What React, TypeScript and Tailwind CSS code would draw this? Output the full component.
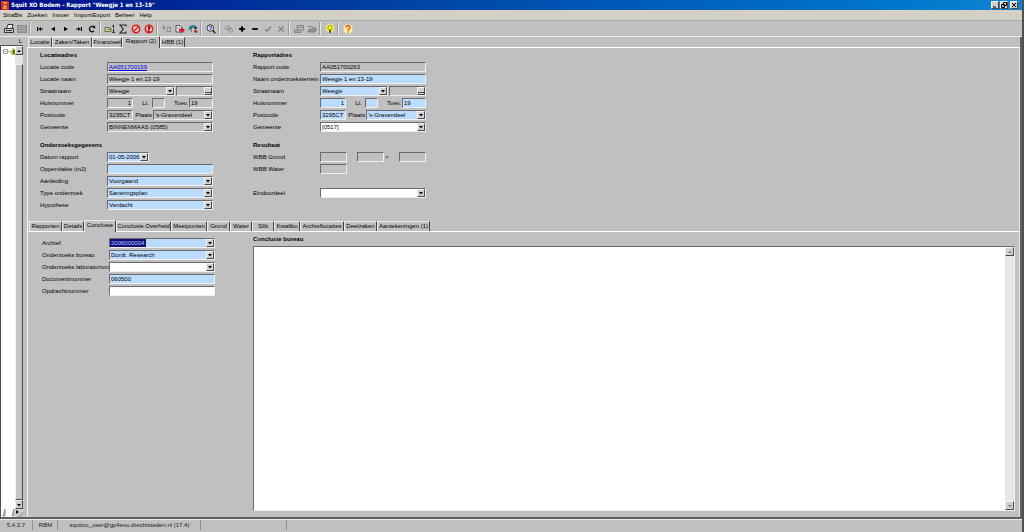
import React, { useState } from "react";
import clsx from "clsx";

const sunken =
  "border border-t-[#6a6a6a] border-l-[#6a6a6a] border-b-[#f0f0f0] border-r-[#f0f0f0]";
const raised =
  "border border-t-[#f4f4f4] border-l-[#f4f4f4] border-b-[#4a4a4a] border-r-[#4a4a4a]";

const tones = {
  gray: "bg-[#c0c0c0]",
  blue: "bg-[#bbdcff]",
  white: "bg-white",
};

type Tone = keyof typeof tones;

/* ---------- icons ---------- */

const icons: Record<string, React.ReactNode> = {
  print: (
    <g fill="none" stroke="#333" strokeWidth="1">
      <path d="M3.5 5.5 L5 1.5 H10 L9 5.5" fill="#eee" />
      <path d="M1.5 5.5 H10.5 V9.5 H1.5 Z" fill="#c8c8c8" />
      <path d="M3 7.5 H9" />
    </g>
  ),
  list: (
    <g fill="none" stroke="#8a8a8a">
      <path d="M1.5 2.5 H10.5 V9.5 H1.5 Z" fill="#a8a8a8" />
      <path d="M2 4.5 H10 M2 6.5 H10 M2 8.5 H10" stroke="#969696" />
    </g>
  ),
  first: <path d="M3 4 H4.2 V8 H3 Z M4.5 6 L7 4 V8 Z M7 5.5 H9 V6.5 H7 Z" fill="#000" />,
  prev: <path d="M4 6 L8 3.8 V8.2 Z" fill="#000" />,
  next: <path d="M8 6 L4 3.8 V8.2 Z" fill="#000" />,
  last: <path d="M9 4 H7.8 V8 H9 Z M7.5 6 L5 4 V8 Z M5 5.5 H3 V6.5 H5 Z" fill="#000" />,
  refresh: (
    <g fill="none" stroke="#111" strokeWidth="1.3">
      <path d="M8 8 A2.7 2.7 0 1 1 7.5 3.6" />
      <path d="M6 5.2 L9.3 5.2 L9 2 Z" fill="#111" stroke="none" />
    </g>
  ),
  key: (
    <g>
      <path d="M1 4.5 H5 L7 5.5 V8.5 H1 Z" fill="#e4dc78" stroke="#444" strokeWidth=".7" />
      <path d="M3 6.3 H7" stroke="#444" strokeWidth=".7" />
      <path d="M9.5 2 V5 M9.5 6 V10 M8.3 3 L9.5 2 M8.3 9.5 H10.8" stroke="#222" fill="none" />
    </g>
  ),
  sum: <path d="M9 3.5 V2 H3 L6.3 6 L3 10 H9 V8.5" fill="none" stroke="#222" strokeWidth="1.1" />,
  stop: (
    <g fill="none" stroke="#e01c1c" strokeWidth="1.5">
      <circle cx="6" cy="6" r="3.7" fill="#e6cccc" />
      <path d="M3.5 8.5 L8.5 3.5" />
    </g>
  ),
  stopAll: (
    <g fill="none" stroke="#e01c1c" strokeWidth="1.5">
      <circle cx="6" cy="6" r="3.7" fill="#e6cccc" />
      <path d="M3.5 8.3 L8.5 3.7" strokeWidth="1" />
      <path d="M6 3.2 V6.6 M6 7.6 V9" stroke="#8c0000" strokeWidth="1.8" />
    </g>
  ),
  copyOff: (
    <g fill="none" stroke="#858585" strokeWidth=".9">
      <path d="M6 4.5 H9.5 V8.5 H6 Z" />
      <path d="M1.5 3 L4 6 M4 3 L1.5 6 M2.7 2.5 V6.5" />
    </g>
  ),
  export: (
    <g>
      <path d="M2 2.5 H6 L7.5 4 V9 H2 Z" fill="#f0f0f0" stroke="#333" strokeWidth=".8" />
      <path d="M3 5 H6" stroke="#333" strokeWidth=".6" />
      <path d="M5 6 H7.5 V4 L11 7.2 L7.5 10.5 V8.5 H5 Z" fill="#dc1028" />
    </g>
  ),
  swap: (
    <g>
      <path d="M1 6.5 L3 3 L6 2 L9 3 L9 5 L6 4 L4.5 6.5 Z" fill="#1d7f80" />
      <path d="M7 4 H10 V6 H7 Z" fill="#335" />
      <circle cx="8.7" cy="8.3" r="1.6" fill="#b02828" />
      <path d="M4.3 6 V9" stroke="#777" />
    </g>
  ),
  zoom: (
    <g fill="none">
      <circle cx="5.3" cy="5" r="3.3" fill="#d8dce8" stroke="#333" strokeWidth=".9" />
      <path d="M4.2 4 A1.2 1.1 0 1 1 5.4 5.2 V6.8" stroke="#2038b0" strokeWidth=".9" />
      <path d="M7.6 7.3 L10.2 10.2" stroke="#222" strokeWidth="1.5" />
    </g>
  ),
  linkOff: (
    <g fill="none" stroke="#808080" strokeWidth=".9">
      <path d="M2 5.5 L5 2.5 L7 5 L4.5 6.5 Z" />
      <path d="M5.5 7 L8 5 L10 7.5 L8 9.5 Z" />
    </g>
  ),
  plus: <path d="M6 3.2 V8.8 M3.2 6 H8.8" stroke="#000" strokeWidth="1.8" />,
  minus: <path d="M3.2 6 H8.8" stroke="#000" strokeWidth="1.8" />,
  check: <path d="M3 6.2 L5 8.3 L9 3.5" fill="none" stroke="#808080" strokeWidth="1.2" />,
  cross: <path d="M3.5 3.5 L8.5 8.5 M8.5 3.5 L3.5 8.5" stroke="#808080" strokeWidth="1.1" />,
  formOff: (
    <g fill="none" stroke="#808080" strokeWidth=".9">
      <path d="M4 2.5 H10.5 V7 H4 Z M4 4.2 H10" />
      <path d="M1.5 6 V9.5 H8 V7.5" />
      <path d="M2 8 H7" />
    </g>
  ),
  openOff: (
    <g stroke="#808080" strokeWidth=".9">
      <path d="M2 3.5 H5.5 L6.5 4.5 H9 V6" fill="none" />
      <path d="M2 9 L3.5 6 H10.5 L9 9 Z" fill="#909090" />
    </g>
  ),
  bulb: (
    <g>
      <circle cx="6" cy="5.3" r="4.2" fill="#f2f060" />
      <circle cx="6" cy="4.8" r="2.2" fill="#ffff30" stroke="#777700" strokeWidth=".8" />
      <path d="M5 7.3 H7 V9.8 H5 Z" fill="#444" />
    </g>
  ),
  help: (
    <g fill="none">
      <circle cx="6" cy="6" r="4.6" fill="#fff0a0" />
      <path d="M4 4.5 A2 1.8 0 1 1 6.2 6.3 V7.4" stroke="#dc5a10" strokeWidth="1.4" />
      <path d="M6.2 8.3 V9.7" stroke="#dc5a10" strokeWidth="1.4" />
    </g>
  ),
};

const toolGroups = [
  ["print", "list"],
  ["first", "prev", "next", "last", "refresh"],
  ["key", "sum", "stop", "stopAll"],
  ["copyOff", "export", "swap"],
  ["zoom"],
  ["linkOff", "plus", "minus", "check", "cross"],
  ["formOff", "openOff"],
  ["bulb"],
  ["help"],
];

function Arrow({ up = false, color = "#000" }: { up?: boolean; color?: string }) {
  return (
    <svg viewBox="0 0 6 6" className="block h-[6px] w-[6px]">
      <path d={up ? "M1 4 L3 2 L5 4 Z" : "M1 2 L3 4.4 L5 2 Z"} fill={color} />
    </svg>
  );
}

/* ---------- fields ---------- */

interface FieldProps {
  id: string;
  label?: string;
  value?: string;
  tone?: Tone;
  className?: string;
}

function TextField({ id, label, value = "", tone = "gray", className }: FieldProps) {
  return (
    <input
      id={id}
      type="text"
      aria-label={label}
      defaultValue={value}
      className={clsx("h-[10px] min-w-0 px-px outline-none", sunken, tones[tone], className)}
    />
  );
}

function SelectField({ id, label, value = "", tone = "gray", className, selected = false }: FieldProps & { selected?: boolean }) {
  return (
    <div className={clsx("relative flex h-[10px] min-w-0", sunken, tones[tone], className)}>
      <select
        id={id}
        aria-label={label}
        defaultValue={value}
        className={clsx(
          "h-2 min-w-0 appearance-none px-px outline-none",
          selected ? "w-9 bg-[#10107c] text-[#b8c8ff]" : "w-full bg-transparent"
        )}
      >
        <option value={value}>{value}</option>
      </select>
      <span
        className={clsx(
          "pointer-events-none absolute top-0 right-0 flex h-2 w-2 items-center justify-center bg-[#d0d0d0]",
          raised
        )}
      >
        <Arrow />
      </span>
    </div>
  );
}

function LookupField({ id, label }: { id: string; label: string }) {
  return (
    <div className={clsx("flex h-[10px] w-[37px]", sunken)}>
      <input id={id} aria-label={label} type="text" className="h-2 min-w-0 flex-1 outline-none" />
      <button
        type="button"
        aria-label="Zoek straat"
        className={clsx("flex h-2 w-2 items-center justify-center bg-[#d0d0d0]", raised)}
      >
        <svg viewBox="0 0 6 6" className="h-[6px] w-[6px]">
          <path d="M0 4.5 H1.4 M2.3 4.5 H3.7 M4.6 4.5 H6" stroke="#000" />
        </svg>
      </button>
    </div>
  );
}

function Row({ label, htmlFor, children }: { label: string; htmlFor: string; children: React.ReactNode }) {
  return (
    <div className="flex h-3 items-center">
      <label htmlFor={htmlFor} className="w-[67px] shrink-0 whitespace-nowrap">
        {label}
      </label>
      <div className="flex w-[106px] items-center justify-between">{children}</div>
    </div>
  );
}

function Heading({ children }: { children: React.ReactNode }) {
  return <h2 className="h-[11px] font-bold leading-[11px]">{children}</h2>;
}

interface AddressProps {
  prefix: string;
  tone: Tone;
  gemeente: string;
  gemeenteTone: Tone;
}

function AddressRows({ prefix, tone, gemeente, gemeenteTone }: AddressProps) {
  return (
    <>
      <Row label="Straatnaam" htmlFor={`${prefix}-straat`}>
        <SelectField id={`${prefix}-straat`} value="Weegje" tone={tone} className="w-[68px]" />
        <LookupField id={`${prefix}-zoek`} label="Straatcode" />
      </Row>
      <Row label="Huisnummer" htmlFor={`${prefix}-nr`}>
        <TextField id={`${prefix}-nr`} value="1" tone={tone} className="w-[26px] text-right" />
        <span className="flex items-center gap-[3px]">
          <label htmlFor={`${prefix}-lt`}>Lt.</label>
          <TextField id={`${prefix}-lt`} tone={tone} className="w-[13px]" />
        </span>
        <span className="flex items-center gap-px">
          <label htmlFor={`${prefix}-toev`}>Toev.</label>
          <TextField id={`${prefix}-toev`} value="19" tone={tone} className="w-[24px]" />
        </span>
      </Row>
      <Row label="Postcode" htmlFor={`${prefix}-pc`}>
        <TextField id={`${prefix}-pc`} value="3295CT" tone={tone} className="w-[26px]" />
        <span className="flex items-center gap-px">
          <label htmlFor={`${prefix}-plaats`}>Plaats</label>
          <SelectField id={`${prefix}-plaats`} value="'s-Gravendeel" tone={tone} className="w-[60px]" />
        </span>
      </Row>
      <Row label="Gemeente" htmlFor={`${prefix}-gem`}>
        <SelectField id={`${prefix}-gem`} value={gemeente} tone={gemeenteTone} className="w-full" />
      </Row>
    </>
  );
}

/* ---------- tabs ---------- */

interface Tab {
  name: string;
  width: string;
}

const mainTabs: Tab[] = [
  { name: "Locatie", width: "w-[24px]" },
  { name: "Zaken/Taken", width: "w-[40px]" },
  { name: "Financieel", width: "w-[30px]" },
  { name: "Rapport (2)", width: "w-[38px]" },
  { name: "HBB (1)", width: "w-[25px]" },
];

const detailTabs: Tab[] = [
  { name: "Rapporten", width: "w-[33px]" },
  { name: "Details", width: "w-[22px]" },
  { name: "Conclusie", width: "w-[32px]" },
  { name: "Conclusie Overheid", width: "w-[55px]" },
  { name: "Meetpunten", width: "w-[36px]" },
  { name: "Grond", width: "w-[23px]" },
  { name: "Water", width: "w-[22px]" },
  { name: "Slib", width: "w-[22px]" },
  { name: "Kwalibo", width: "w-[26px]" },
  { name: "Archieflocaties", width: "w-[44px]" },
  { name: "Deelzaken", width: "w-[33px]" },
  { name: "Aantekeningen (1)", width: "w-[53px]" },
];

function TabBar({ tabs, initial }: { tabs: Tab[]; initial: string }) {
  const [active, setActive] = useState(initial);

  return (
    <div role="tablist" className="flex h-[11px] shrink-0 items-end border-b border-white pl-px">
      {tabs.map((tab) => (
        <button
          key={tab.name}
          type="button"
          role="tab"
          aria-selected={active === tab.name}
          onClick={() => setActive(tab.name)}
          className={clsx(
            "flex shrink-0 justify-center whitespace-nowrap border-t border-l border-r border-t-[#ececec] border-l-[#ececec] border-r-[#404040]",
            tab.width,
            active === tab.name ? "-mb-px h-3 bg-[#c0c0c0]" : "h-[10px]"
          )}
        >
          {tab.name}
        </button>
      ))}
    </div>
  );
}

/* ---------- window parts ---------- */

function TitleBar() {
  return (
    <header className="flex h-[10px] shrink-0 items-center bg-linear-to-r from-[#000888] to-[#1084d4] pr-1 pl-px">
      <svg viewBox="0 0 8 9" className="h-[9px] w-2">
        <path d="M0 0 H8 V9 H0 Z" fill="#d83018" />
        <path d="M2 1 H6 L5 4 L6 8 H2 L3 4 Z" fill="#f8a040" />
        <path d="M3 3 H5 V4 H3 Z" fill="#902010" />
      </svg>
      <h1 className="ml-[2px] flex-1 font-['DejaVu_Sans_Condensed','Liberation_Sans',sans-serif] font-bold text-white">
        Squit XO Bodem - Rapport "Weegje 1 en 13-19"
      </h1>
      <div className="flex gap-px">
        <button type="button" aria-label="Minimaliseren" className={clsx("h-2 w-2 bg-[#d4d0c8]", raised)}>
          <svg viewBox="0 0 6 6" className="h-[6px] w-[6px]">
            <path d="M1 5 H4" stroke="#000" />
          </svg>
        </button>
        <button type="button" aria-label="Verkleinen" className={clsx("h-2 w-2 bg-[#d4d0c8]", raised)}>
          <svg viewBox="0 0 6 6" className="h-[6px] w-[6px]">
            <path d="M2.5 .5 H5.5 V3.5 H2.5 Z M.5 2.5 H3.5 V5.5 H.5 Z" fill="#d4d0c8" stroke="#000" />
          </svg>
        </button>
        <button type="button" aria-label="Sluiten" className={clsx("ml-px h-2 w-2 bg-[#d4d0c8]", raised)}>
          <svg viewBox="0 0 6 6" className="h-[6px] w-[6px]">
            <path d="M1 1 L5 5 M5 1 L1 5" stroke="#000" />
          </svg>
        </button>
      </div>
    </header>
  );
}

function MenuBar() {
  const items = ["StraBis", "Zoeken", "Invoer", "Import/Export", "Beheer", "Help"];
  return (
    <nav className="flex h-[10px] shrink-0 items-center gap-[5px] bg-[#d4d0c8] pl-[3px]">
      {items.map((item) => (
        <button key={item} type="button">
          {item}
        </button>
      ))}
    </nav>
  );
}

function Toolbar() {
  return (
    <div className="flex h-[17px] shrink-0 items-center border-t border-b border-t-[#aaa] border-b-[#ececec] pl-[2px]">
      {toolGroups.map((group, i) => (
        <React.Fragment key={i}>
          {i > 0 && <span className="mr-[2px] ml-px h-[13px] w-[2px] border-r border-l border-l-[#989898] border-r-[#e8e8e8]" />}
          {group.map((name) => (
            <button key={name} type="button" aria-label={name} className="flex w-[13px] justify-center">
              <svg viewBox="0 0 12 12" className="h-3 w-3">
                {icons[name]}
              </svg>
            </button>
          ))}
        </React.Fragment>
      ))}
    </div>
  );
}

function ScrollButton({ up = false, color }: { up?: boolean; color?: string }) {
  return (
    <button
      type="button"
      aria-label={up ? "Omhoog" : "Omlaag"}
      className={clsx("flex h-[9px] w-full items-center justify-center bg-[#d0d0d0]", raised)}
    >
      <Arrow up={up} color={color} />
    </button>
  );
}

function TreePane() {
  return (
    <aside className="flex w-[23px] shrink-0 flex-col">
      <div className="h-2 pr-px text-right">L</div>
      <div className="flex flex-1 border-t border-l border-[#505050] bg-white">
        <div className="flex flex-1 flex-col justify-between">
          <svg viewBox="0 0 14 10" className="h-[10px] w-[14px]">
            <path d="M2.5 3.5 H6.5 V7.5 H2.5 Z M3.5 5.5 H5.5" fill="#fff" stroke="#888" strokeWidth=".8" />
            <path d="M7 5.5 H9" stroke="#aaa" />
            <path d="M9 6 L12 2 L14 3 V9 H11 Z" fill="#c8c030" />
            <path d="M12 4 H14 V8 H12 Z" fill="#507030" />
          </svg>
          <svg viewBox="0 0 14 9" className="h-[9px] w-[14px]">
            <path d="M2 8 L4 1 V8 Z M11 8 L13 1 V8 Z" fill="#c8c8c8" stroke="#777" strokeWidth=".7" />
          </svg>
        </div>
        <div className="flex w-2 flex-col bg-[#e4e4e4]">
          <ScrollButton up />
          <div className="h-[9px]" />
          <div className={clsx("flex-1 bg-[#c4c4c4]", raised)} />
          <ScrollButton />
          <svg viewBox="0 0 8 8" className="h-2 w-2">
            <path d="M0 0 H8 V8 H0 Z" fill="#d0d0d0" />
            <path d="M1 1 L4 3 L1 5 Z" fill="#000" />
            <path d="M3 8 L8 3 M5.5 8 L8 5.5" stroke="#888" />
          </svg>
        </div>
      </div>
    </aside>
  );
}

function RapportForm() {
  return (
    <div className="flex shrink-0 gap-[40px] pt-[2px] pb-[10px] pl-3">
      <div>
        <Heading>Locatieadres</Heading>
        <Row label="Locatie code" htmlFor="loc-code">
          <div className={clsx("h-[10px] w-full px-px leading-2", sunken)}>
            <a id="loc-code" href="#locatie" className="text-[#0000d8] underline">
              AA051700159
            </a>
          </div>
        </Row>
        <Row label="Locatie naam" htmlFor="loc-naam">
          <TextField id="loc-naam" value="Weegje 1 en 13-19" className="w-full" />
        </Row>
        <AddressRows prefix="loc" tone="gray" gemeente="BINNENMAAS (0585)" gemeenteTone="gray" />
        <div className="pt-[7px]">
          <Heading>Onderzoeksgegevens</Heading>
          <Row label="Datum rapport" htmlFor="datum">
            <SelectField id="datum" value="01-05-2006" tone="blue" className="w-[42px]" />
          </Row>
          <Row label="Oppervlakte (m2)" htmlFor="opp">
            <TextField id="opp" tone="blue" className="w-full" />
          </Row>
          <Row label="Aanleiding" htmlFor="aanleiding">
            <SelectField id="aanleiding" value="Voorgaand" tone="blue" className="w-full" />
          </Row>
          <Row label="Type onderzoek" htmlFor="type">
            <SelectField id="type" value="Saneringsplan" tone="blue" className="w-full" />
          </Row>
          <Row label="Hypothese" htmlFor="hypothese">
            <SelectField id="hypothese" value="Verdacht" tone="blue" className="w-full" />
          </Row>
        </div>
      </div>

      <div>
        <Heading>Rapportadres</Heading>
        <Row label="Rapport code" htmlFor="rap-code">
          <TextField id="rap-code" value="AA051700263" className="w-full" />
        </Row>
        <Row label="Naam onderzoeksterrein" htmlFor="rap-naam">
          <TextField id="rap-naam" value="Weegje 1 en 13-19" tone="blue" className="w-full" />
        </Row>
        <AddressRows prefix="rap" tone="blue" gemeente="[0517]" gemeenteTone="white" />
        <div className="pt-[7px]">
          <Heading>Resultaat</Heading>
          <Row label="WBB Grond" htmlFor="grond-1">
            <TextField id="grond-1" className="w-[27px]" />
            <span className="flex items-center gap-px">
              <TextField id="grond-2" label="WBB Grond tot" className="w-[27px]" />
              &lt;
            </span>
            <TextField id="grond-3" label="WBB Grond grens" className="w-[27px]" />
          </Row>
          <Row label="WBB Water" htmlFor="water">
            <TextField id="water" className="w-[27px]" />
          </Row>
          <div className="pt-3">
            <Row label="Eindoordeel" htmlFor="eind">
              <SelectField id="eind" tone="white" className="w-full" />
            </Row>
          </div>
        </div>
      </div>
    </div>
  );
}

function ConclusiePanel() {
  return (
    <div className="flex min-h-0 flex-1 gap-[38px] pt-[2px] pr-1 pb-[6px] pl-[14px]">
      <div className="shrink-0 pt-[3px]">
        <Row label="Archief" htmlFor="archief">
          <SelectField id="archief" value="2006000004" tone="blue" className="w-full" selected />
        </Row>
        <Row label="Onderzoeks bureau" htmlFor="bureau">
          <SelectField id="bureau" value="Dordt. Research" tone="blue" className="w-full" />
        </Row>
        <Row label="Onderzoeks laboratorium" htmlFor="lab">
          <SelectField id="lab" tone="white" className="w-full" />
        </Row>
        <Row label="Documentnummer" htmlFor="docnr">
          <TextField id="docnr" value="060500" tone="blue" className="w-full" />
        </Row>
        <Row label="Opdrachtnummer" htmlFor="opdnr">
          <TextField id="opdnr" tone="white" className="w-full" />
        </Row>
      </div>

      <div className="flex min-w-0 flex-1 flex-col">
        <label htmlFor="conclusie" className="h-3 font-bold leading-[11px]">
          Conclusie bureau
        </label>
        <div className={clsx("flex min-h-0 flex-1 bg-white", sunken)}>
          <textarea id="conclusie" className="min-w-0 flex-1 resize-none p-px outline-none" />
          <div className="flex w-[9px] flex-col justify-between bg-[#e6e6e6]">
            <ScrollButton up color="#808080" />
            <ScrollButton color="#808080" />
          </div>
        </div>
      </div>
    </div>
  );
}

function StatusBar() {
  const cell = "flex h-[10px] items-center justify-center border-r border-[#909090] whitespace-nowrap";
  return (
    <footer className="flex h-[13px] shrink-0 items-start gap-px border-t border-[#e8e8e8] text-[#222]">
      <span className={clsx(cell, "w-[33px]")}>5.4.3.7</span>
      <span className={clsx(cell, "w-[24px]")}>RBM</span>
      <span className={clsx(cell, "w-[142px]")}>squitxo_user@gp4exo.drechtsteden.nl (17.4)</span>
      <span className={clsx(cell, "w-[85px]")} />
      <span className="flex-1" />
    </footer>
  );
}

export default function App() {
  return (
    <div className="flex h-screen bg-[#505050] font-['Liberation_Sans',Arial,sans-serif] text-[6px] leading-[8px] text-black">
      <div className="mr-[2px] flex min-w-0 flex-1 flex-col bg-[#c0c0c0]">
        <TitleBar />
        <MenuBar />
        <Toolbar />
        <div className="flex min-h-0 flex-1 border-b-2 border-[#606060]">
          <TreePane />
          <main className="flex min-w-0 flex-1 flex-col border-r-2 border-r-[#606060] pl-1">
            <TabBar tabs={mainTabs} initial="Rapport (2)" />
            <div className="flex min-h-0 flex-1 flex-col border-r border-l border-l-[#f4f4f4] border-r-[#e8e8e8]">
              <RapportForm />
              <TabBar tabs={detailTabs} initial="Conclusie" />
              <ConclusiePanel />
            </div>
          </main>
        </div>
        <StatusBar />
      </div>
    </div>
  );
}
